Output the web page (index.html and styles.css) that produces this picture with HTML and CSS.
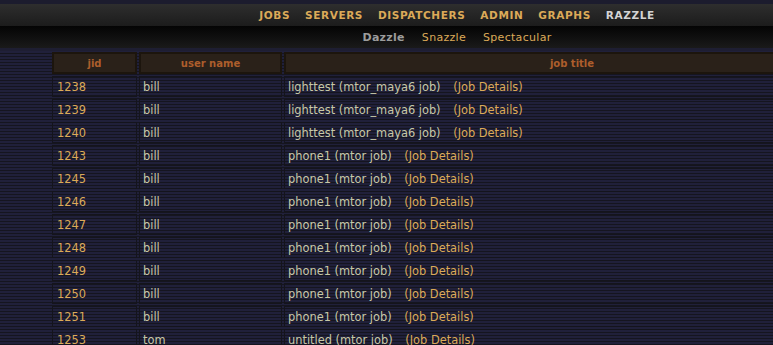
FILE: index.html
```html
<!DOCTYPE html>
<html lang="en">
<head>
    <meta charset="UTF-8">
    <title>Razzle - Jobs</title>
    <link rel="stylesheet" href="styles.css">
</head>
<body>
    <div class="topstrip"></div>
    <div class="navbar">
        <a href="#">JOBS</a>
        <a href="#">SERVERS</a>
        <a href="#">DISPATCHERS</a>
        <a href="#">ADMIN</a>
        <a href="#">GRAPHS</a>
        <a href="#" class="current">RAZZLE</a>
    </div>
    <div class="subnav">
        <a href="#" class="current">Dazzle</a>
        <a href="#">Snazzle</a>
        <a href="#">Spectacular</a>
    </div>
    <div class="divider"></div>

    <table class="jobs">
        <thead>
            <tr>
                <th class="col-jid">jid</th>
                <th class="col-user">user name</th>
                <th class="col-title">job title</th>
            </tr>
        </thead>
        <tbody>
            <tr><td class="jid">1238</td><td>bill</td><td>lighttest (mtor_maya6 job) <a href="#" class="details">(Job Details)</a></td></tr>
            <tr><td class="jid">1239</td><td>bill</td><td>lighttest (mtor_maya6 job) <a href="#" class="details">(Job Details)</a></td></tr>
            <tr><td class="jid">1240</td><td>bill</td><td>lighttest (mtor_maya6 job) <a href="#" class="details">(Job Details)</a></td></tr>
            <tr><td class="jid">1243</td><td>bill</td><td>phone1 (mtor job) <a href="#" class="details">(Job Details)</a></td></tr>
            <tr><td class="jid">1245</td><td>bill</td><td>phone1 (mtor job) <a href="#" class="details">(Job Details)</a></td></tr>
            <tr><td class="jid">1246</td><td>bill</td><td>phone1 (mtor job) <a href="#" class="details">(Job Details)</a></td></tr>
            <tr><td class="jid">1247</td><td>bill</td><td>phone1 (mtor job) <a href="#" class="details">(Job Details)</a></td></tr>
            <tr><td class="jid">1248</td><td>bill</td><td>phone1 (mtor job) <a href="#" class="details">(Job Details)</a></td></tr>
            <tr><td class="jid">1249</td><td>bill</td><td>phone1 (mtor job) <a href="#" class="details">(Job Details)</a></td></tr>
            <tr><td class="jid">1250</td><td>bill</td><td>phone1 (mtor job) <a href="#" class="details">(Job Details)</a></td></tr>
            <tr><td class="jid">1251</td><td>bill</td><td>phone1 (mtor job) <a href="#" class="details">(Job Details)</a></td></tr>
            <tr><td class="jid">1253</td><td>tom</td><td>untitled (mtor job) <a href="#" class="details">(Job Details)</a></td></tr>
        </tbody>
    </table>
</body>
</html>
```

FILE: styles.css
```css
body {
    margin: 0;
    padding: 0;
    overflow: hidden;
    font-family: "DejaVu Sans", Verdana, sans-serif;
    font-size: 11.4px;
    color: #c8c8a8;
    background-color: #1d1d33;
    background-image: repeating-linear-gradient(to bottom, #20203a 0, #20203a 2px, #15151f 2px, #15151f 3px);
}

a {
    text-decoration: none;
    color: #dcaa58;
}

.topstrip {
    height: 4px;
    background-color: #1c1c2e;
}

.navbar {
    height: 22px;
    display: flex;
    justify-content: center;
    align-items: center;
    gap: 15px;
    padding-left: 141px;
    background: linear-gradient(to bottom, #2e2e2e, #1c1c1c);
}

.navbar a {
    font-weight: bold;
    font-size: 10.5px;
    letter-spacing: 0.6px;
    color: #dcaa58;
}

.navbar a.current {
    color: #d4d4d4;
}

.subnav {
    height: 22px;
    display: flex;
    justify-content: center;
    align-items: center;
    gap: 17px;
    padding-left: 141px;
    background: linear-gradient(to bottom, #040404, #1a1a1a);
}

.subnav a {
    font-size: 11px;
    letter-spacing: 0.3px;
}

.subnav a.current {
    font-weight: bold;
    color: #9c9c9c;
}

.divider {
    height: 3px;
    background-color: #1e1e32;
}

.jobs {
    margin-left: 50px;
    width: 812px;
    border-collapse: separate;
    border-spacing: 2px;
    margin-top: -1px;
}

.jobs th {
    height: 18px;
    padding: 0;
    background-color: #2a2119;
    border: 2px solid #1c150d;
    color: #ad5e2c;
    font-weight: bold;
    font-size: 10px;
    text-align: center;
}

.col-jid {
    width: 81px;
}

.col-user {
    width: 139px;
}

.jobs td {
    height: 19px;
    padding: 0 3px;
    border: 1px solid #14141c;
    white-space: nowrap;
}

.jobs td.jid {
    color: #dcaa58;
    padding-left: 4px;
}

.details {
    margin-left: 9px;
}
```
